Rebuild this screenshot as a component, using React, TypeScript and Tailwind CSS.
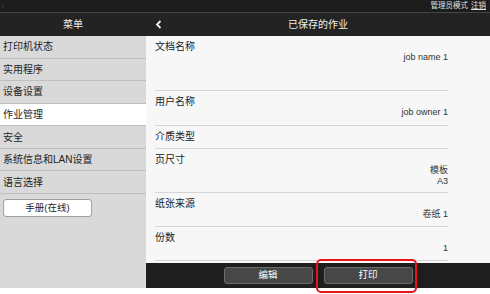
import React from "react";

const cjk = { fontFamily: '"Liberation Sans", "Noto Sans CJK SC", sans-serif' };

const menu = ["打印机状态", "实用程序", "设备设置", "作业管理", "安全", "系统信息和LAN设置", "语言选择"];

type Row = { label: string; values: string[]; h: string };
const rows: Row[] = [
  { label: "文档名称", values: ["job name 1"], h: "h-[55px]" },
  { label: "用户名称", values: ["job owner 1"], h: "h-[35px]" },
  { label: "介质类型", values: [], h: "h-[23px]" },
  { label: "页尺寸", values: ["模板", "A3"], h: "h-[44px]" },
  { label: "纸张来源", values: ["卷纸 1"], h: "h-[34px]" },
  { label: "份数", values: ["1"], h: "h-[34px]" },
];

export default function App() {
  return (
    <div className="w-[490px] h-[294px] bg-white overflow-hidden flex flex-col" style={cjk}>
      {/* top strip */}
      <div className="h-[12px] bg-[#1c1c1c] flex items-center justify-between px-[2px]">
        <span className="text-[6px] leading-none text-[#666]">/</span>
        <div className="flex items-center gap-[3px] text-[7.5px] leading-none text-[#e0e0e0] pr-[2px]">
          <span>管理员模式</span>
          <span className="underline">注销</span>
        </div>
      </div>
      <div className="h-[1px] bg-[#454545]" />
      {/* header */}
      <div className="h-[23px] bg-[#232323] flex text-[10px] text-[#f0f0f0]">
        <div className="w-[146px] flex items-center justify-center">菜单</div>
        <div className="flex-1 relative flex items-center justify-center">
          <svg className="absolute left-[9px] top-[7px]" width="7" height="9" viewBox="0 0 7 9">
            <path d="M5.5 1 L2 4.5 L5.5 8" fill="none" stroke="#f0f0f0" strokeWidth="1.8" />
          </svg>
          <span>已保存的作业</span>
        </div>
      </div>
      {/* body */}
      <div className="h-[252px] flex">
        <div className="w-[146px] bg-[#d9d9d9] flex flex-col">
          {menu.map((m, i) => (
            <div
              key={m}
              className={`h-[22.57px] flex items-center pl-[3px] text-[10px] text-[#1e1e1e] border-b border-[#bfbfbf] ${
                i === 3 ? "bg-white" : ""
              }`}
            >
              {m}
            </div>
          ))}
          <div className="pl-[3px] pt-[5px]">
            <div className="w-[89px] h-[18px] bg-white border border-[#a0a0a0] rounded-[3px] flex items-center justify-center text-[9.5px] text-[#1e1e1e]">
              手册(在线)
            </div>
          </div>
        </div>
        <div className="flex-1 bg-[#f7f7f7] flex flex-col">
          <div className="flex-1 flex flex-col pl-[9px] pr-[42px]">
            {rows.map((r) => (
              <div key={r.label} className={`${r.h} border-b border-[#d6d6d6] pt-[5px] flex flex-col`}>
                <div className="text-[10px] leading-[11px] text-[#222]">{r.label}</div>
                {r.values.map((v) => (
                  <div key={v} className="text-[9px] leading-[11px] text-[#333] text-right">
                    {v}
                  </div>
                ))}
              </div>
            ))}
          </div>
          <div className="h-[25px] bg-[#1e1e1e] flex items-center justify-center gap-[11px] relative">
            <div className="w-[89px] h-[17px] bg-[#474747] border border-[#6b6b6b] rounded-[3px] flex items-center justify-center text-[9.5px] text-white">
              编辑
            </div>
            <div className="w-[89px] h-[17px] bg-[#474747] border border-[#6b6b6b] rounded-[3px] flex items-center justify-center text-[9.5px] text-white">
              打印
            </div>
            <div className="absolute left-[170px] top-[-4px] w-[101px] h-[34px] border-2 border-[#e8141c] rounded-[5px]" />
          </div>
        </div>
      </div>
    </div>
  );
}
